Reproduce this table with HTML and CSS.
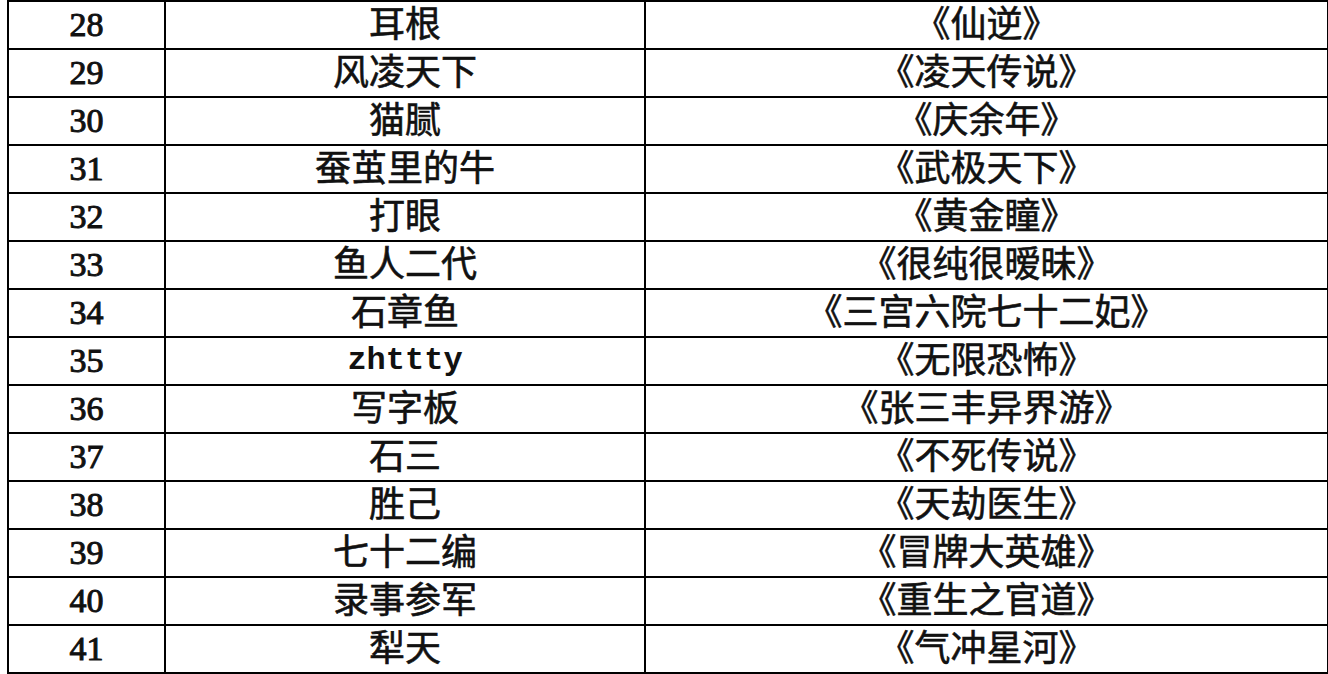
FILE: index.html
```html
<!DOCTYPE html>
<html lang="zh-CN">
<head>
<meta charset="utf-8">
<title>名单</title>
<link rel="stylesheet" href="styles.css">
</head>
<body>
<table class="list">
  <colgroup>
    <col class="c-num">
    <col class="c-name">
    <col class="c-book">
  </colgroup>
  <tbody>
    <tr><td class="num">28</td><td>耳根</td><td>《仙逆》</td></tr>
    <tr><td class="num">29</td><td>风凌天下</td><td>《凌天传说》</td></tr>
    <tr><td class="num">30</td><td>猫腻</td><td>《庆余年》</td></tr>
    <tr><td class="num">31</td><td>蚕茧里的牛</td><td>《武极天下》</td></tr>
    <tr><td class="num">32</td><td>打眼</td><td>《黄金瞳》</td></tr>
    <tr><td class="num">33</td><td>鱼人二代</td><td>《很纯很暧昧》</td></tr>
    <tr><td class="num">34</td><td>石章鱼</td><td>《三宫六院七十二妃》</td></tr>
    <tr><td class="num">35</td><td class="latin">zhttty</td><td>《无限恐怖》</td></tr>
    <tr><td class="num">36</td><td>写字板</td><td>《张三丰异界游》</td></tr>
    <tr><td class="num">37</td><td>石三</td><td>《不死传说》</td></tr>
    <tr><td class="num">38</td><td>胜己</td><td>《天劫医生》</td></tr>
    <tr><td class="num">39</td><td>七十二编</td><td>《冒牌大英雄》</td></tr>
    <tr><td class="num">40</td><td>录事参军</td><td>《重生之官道》</td></tr>
    <tr><td class="num">41</td><td>犁天</td><td>《气冲星河》</td></tr>
  </tbody>
</table>
</body>
</html>
```

FILE: styles.css
```css
html, body {
  margin: 0;
  padding: 0;
  background: #ffffff;
}

body {
  padding-left: 7px;
}

.list {
  border-collapse: collapse;
  table-layout: fixed;
  width: 1320px;
  font-family: "Liberation Serif", "Noto Sans CJK SC", serif;
  font-weight: 400;
  color: #111111;
}

.c-num { width: 157px; }
.c-name { width: 480px; }
.c-book { width: 683px; }

.list td {
  border: 2px solid #000000;
  height: 46px;
  padding: 0;
  text-align: center;
  vertical-align: middle;
  font-size: 36px;
  line-height: 44px;
  white-space: nowrap;
  -webkit-text-stroke: 0.6px #111111;
}

.list td.num {
  font-size: 34px;
  -webkit-text-stroke: 1px #111111;
}

.list td.latin {
  font-family: "Liberation Mono", monospace;
  font-size: 32px;
  font-weight: 700;
  -webkit-text-stroke: 0;
}
```
